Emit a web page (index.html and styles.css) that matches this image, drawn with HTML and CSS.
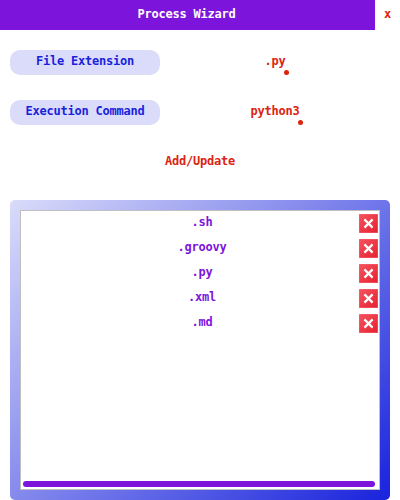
FILE: index.html
```
<!DOCTYPE html>
<html lang="en">
<head>
<meta charset="utf-8">
<title>Process Wizard</title>
<link rel="stylesheet" href="styles.css">
</head>
<body>
<header class="titlebar">
  <h1 class="title">Process Wizard</h1>
  <button class="close">x</button>
</header>
<main class="content">
  <div class="field">
    <span class="label">File Extension</span>
    <span class="value"><span class="entry">.py<i class="cursor"></i></span></span>
  </div>
  <div class="field">
    <span class="label">Execution Command</span>
    <span class="value"><span class="entry">python3<i class="cursor"></i></span></span>
  </div>
  <button class="submit">Add/Update</button>
  <section class="frame">
    <div class="list">
      <div class="row"><span class="name">.sh</span><svg class="delete" viewBox="0 0 19 19"><use href="#remove"/></svg></div>
      <div class="row"><span class="name">.groovy</span><svg class="delete" viewBox="0 0 19 19"><use href="#remove"/></svg></div>
      <div class="row"><span class="name">.py</span><svg class="delete" viewBox="0 0 19 19"><use href="#remove"/></svg></div>
      <div class="row"><span class="name">.xml</span><svg class="delete" viewBox="0 0 19 19"><use href="#remove"/></svg></div>
      <div class="row"><span class="name">.md</span><svg class="delete" viewBox="0 0 19 19"><use href="#remove"/></svg></div>
      <div class="scrollbar"></div>
    </div>
  </section>
</main>
<svg class="defs" width="0" height="0">
  <defs>
    <linearGradient id="red" x1="0" y1="0" x2="1" y2="1">
      <stop offset="0" stop-color="#f65460"/>
      <stop offset="1" stop-color="#e5202f"/>
    </linearGradient>
    <symbol id="remove" viewBox="0 0 19 19">
      <rect width="19" height="19" rx="1" fill="url(#red)"/>
      <rect x=".5" y=".5" width="18" height="18" rx=".5" fill="none" stroke="#f4606c" stroke-opacity=".6"/>
      <path d="M5.4 5.4l8.2 8.2M13.6 5.4l-8.2 8.2" stroke="#fff" stroke-width="2.2"/>
    </symbol>
  </defs>
</svg>
</body>
</html>
```
FILE: styles.css
```
* { box-sizing: border-box; }
body {
  margin: 0;
  width: 400px;
  height: 500px;
  overflow: hidden;
  background: #fff;
  font: bold 12px/22px "DejaVu Sans Mono", monospace;
  letter-spacing: -0.22px;
}
button {
  padding: 0;
  border: 0;
  background: none;
  font: inherit;
  letter-spacing: inherit;
  color: #dc2311;
}
.titlebar { display: flex; height: 30px; }
.title {
  width: 375px;
  margin: 0;
  padding-right: 2px;
  background: #7d14dc;
  color: #fff;
  font: inherit;
  line-height: 28px;
  text-align: center;
}
.close { width: 25px; height: 28px; line-height: 28px; }
.content {
  display: flex;
  flex-direction: column;
  padding: 20px 10px 0;
}
.field { display: flex; height: 25px; margin-bottom: 25px; }
.label {
  width: 150px;
  height: 25px;
  border-radius: 10px;
  background: #dadcfa;
  color: #1923dc;
  text-align: center;
}
.value { width: 230px; text-align: center; color: #dc2311; }
.entry { position: relative; }
.cursor {
  position: absolute;
  right: -3px;
  top: 16px;
  width: 5px;
  height: 5px;
  border-radius: 50%;
  background: #dc2311;
}
.submit { height: 25px; line-height: 22px; padding-bottom: 3px; margin-bottom: 25px; }
.frame {
  height: 300px;
  padding: 10px;
  border-radius: 5px;
  background: linear-gradient(135deg, #dadcfa, #1923dc);
}
.list {
  display: flex;
  flex-direction: column;
  height: 280px;
  padding: 1px;
  border: 1px solid #c0c0c0;
  background: #fff;
  color: #7d14dc;
}
.row { display: flex; height: 25px; }
.name {
  width: 358px;
  margin-right: -21px;
  padding-left: 2px;
  text-align: center;
  line-height: 21px;
}
.delete { flex: none; width: 19px; height: 19px; margin-top: 2px; }
.scrollbar {
  width: 352px;
  height: 6px;
  margin: auto 0 1px 1px;
  border-radius: 3px;
  background: #7d14dc;
}
.defs { display: block; }
```
